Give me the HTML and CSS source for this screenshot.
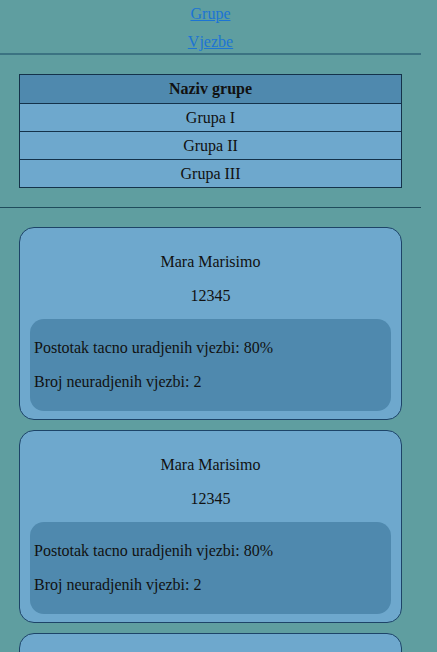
FILE: index.html
```html
<!DOCTYPE html>
<html lang="hr">
<head>
<meta charset="utf-8">
<title>Grupe</title>
<link rel="stylesheet" href="styles.css">
</head>
<body>
<div class="page">
  <nav class="nav">
    <a href="#">Grupe</a>
    <a href="#">Vjezbe</a>
  </nav>
  <div class="rule thick"></div>
  <section class="groups">
    <table class="group-table">
      <thead>
        <tr><th>Naziv grupe</th></tr>
      </thead>
      <tbody>
        <tr><td>Grupa I</td></tr>
        <tr><td>Grupa II</td></tr>
        <tr><td>Grupa III</td></tr>
      </tbody>
    </table>
  </section>
  <div class="rule"></div>
  <section class="cards">
    <div class="card">
      <p class="name">Mara Marisimo</p>
      <p class="index">12345</p>
      <div class="stats">
        <p>Postotak tacno uradjenih vjezbi: 80%</p>
        <p>Broj neuradjenih vjezbi: 2</p>
      </div>
    </div>
    <div class="card">
      <p class="name">Mara Marisimo</p>
      <p class="index">12345</p>
      <div class="stats">
        <p>Postotak tacno uradjenih vjezbi: 80%</p>
        <p>Broj neuradjenih vjezbi: 2</p>
      </div>
    </div>
    <div class="card">
      <p class="name">Mara Marisimo</p>
      <p class="index">12345</p>
      <div class="stats">
        <p>Postotak tacno uradjenih vjezbi: 80%</p>
        <p>Broj neuradjenih vjezbi: 2</p>
      </div>
    </div>
  </section>
</div>
</body>
</html>
```
FILE: styles.css
```css
html, body {
  margin: 0;
  padding: 0;
  background: #5f9ea0;
  font-family: "Liberation Serif", "Times New Roman", serif;
  font-size: 16px;
  color: #111;
  overflow: hidden;
}

.page {
  width: 421px;
}

.nav {
  display: flex;
  flex-direction: column;
  align-items: center;
  gap: 10px;
  padding-top: 5px;
  padding-bottom: 2px;
  line-height: 18px;
}

.nav a {
  color: #1c74d4;
  text-decoration: underline;
}

.rule {
  height: 0;
  border-top: 1px solid #1f4c5c;
}

.rule.thick {
  border-top: 2px solid #3b7382;
}

.groups {
  padding: 19px;
}

.group-table {
  width: 100%;
  border-collapse: collapse;
  border: 1px solid #14324a;
}

.group-table th,
.group-table td {
  border: 1px solid #14324a;
  text-align: center;
  padding: 0;
  height: 27px;
}

.group-table th {
  background: #4f89ae;
  font-weight: bold;
  height: 28px;
}

.group-table td {
  background: #6ea8cd;
}

.cards {
  display: flex;
  flex-direction: column;
  gap: 10px;
  padding: 19px 19px 0 19px;
}

.card {
  background: #6ea8cd;
  border: 1px solid #1d4468;
  border-radius: 15px;
  padding: 9px 10px 8px 10px;
}

.card p {
  margin: 16px 0;
  line-height: 18px;
}

.card .name,
.card .index {
  text-align: center;
}

.card .index {
  margin-bottom: 14px;
}

.stats {
  background: #4f89ae;
  border-radius: 14px;
  padding: 4px;
}

.stats p {
  margin: 16px 0;
}
```
